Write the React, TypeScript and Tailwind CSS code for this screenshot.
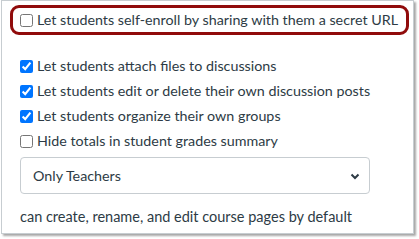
import { useState } from "react";

const options = [
    { label: "Let students attach files to discussions", checked: true },
    { label: "Let students edit or delete their own discussion posts", checked: true },
    { label: "Let students organize their own groups", checked: true },
    { label: "Hide totals in student grades summary", checked: false },
];

export default function App() {
    const [checks, setChecks] = useState(options.map((o) => o.checked));
    const [selfEnroll, setSelfEnroll] = useState(false);

    return (
        <div className="w-[419px] h-[239px] bg-white font-['Lato','Liberation_Sans',sans-serif] text-[#2d3b45]">
            <div className="ml-[1px] w-[413px] h-[234px] border border-[#c7cdd1] bg-white shadow-[2px_2px_2px_rgba(0,0,0,0.35)]">
                <div className="ml-[8px] mt-[4px] w-[399px] h-[30px] rounded-[9px] border-[3px] border-[#900b0b] flex items-center pl-[7px]">
                    <input
                        type="checkbox"
                        checked={selfEnroll}
                        onChange={() => setSelfEnroll(!selfEnroll)}
                        className="w-[13px] h-[13px] m-0"
                    />
                    <span className="ml-[4px] text-[14.3px] leading-none whitespace-nowrap">
                        Let students self-enroll by sharing with them a secret URL
                    </span>
                </div>

                <div className="mt-[19px] pl-[18px] flex flex-col">
                    {options.map((o, i) => (
                        <label key={o.label} className="h-[25px] flex items-center">
                            <input
                                type="checkbox"
                                checked={checks[i]}
                                onChange={() =>
                                    setChecks(checks.map((c, j) => (j === i ? !c : c)))
                                }
                                className="w-[13px] h-[13px] m-0"
                            />
                            <span className="ml-[4px] text-[14.3px] leading-none whitespace-nowrap">
                                {o.label}
                            </span>
                        </label>
                    ))}
                </div>

                <div className="ml-[18px] mt-[3px] w-[350px] h-[37px] border border-[#c7cdd1] rounded-[4px] flex items-center justify-between pl-[12px] pr-[8px]">
                    <span className="text-[14.3px]">Only Teachers</span>
                    <svg width="12" height="12" viewBox="0 0 12 12">
                        <path
                            d="M2.5 4.5 L6 8 L9.5 4.5"
                            fill="none"
                            stroke="#2d3b45"
                            strokeWidth="2"
                        />
                    </svg>
                </div>

                <p className="ml-[18px] mt-[16px] text-[14.5px] leading-none whitespace-nowrap">
                    can create, rename, and edit course pages by default
                </p>
            </div>
        </div>
    );
}
